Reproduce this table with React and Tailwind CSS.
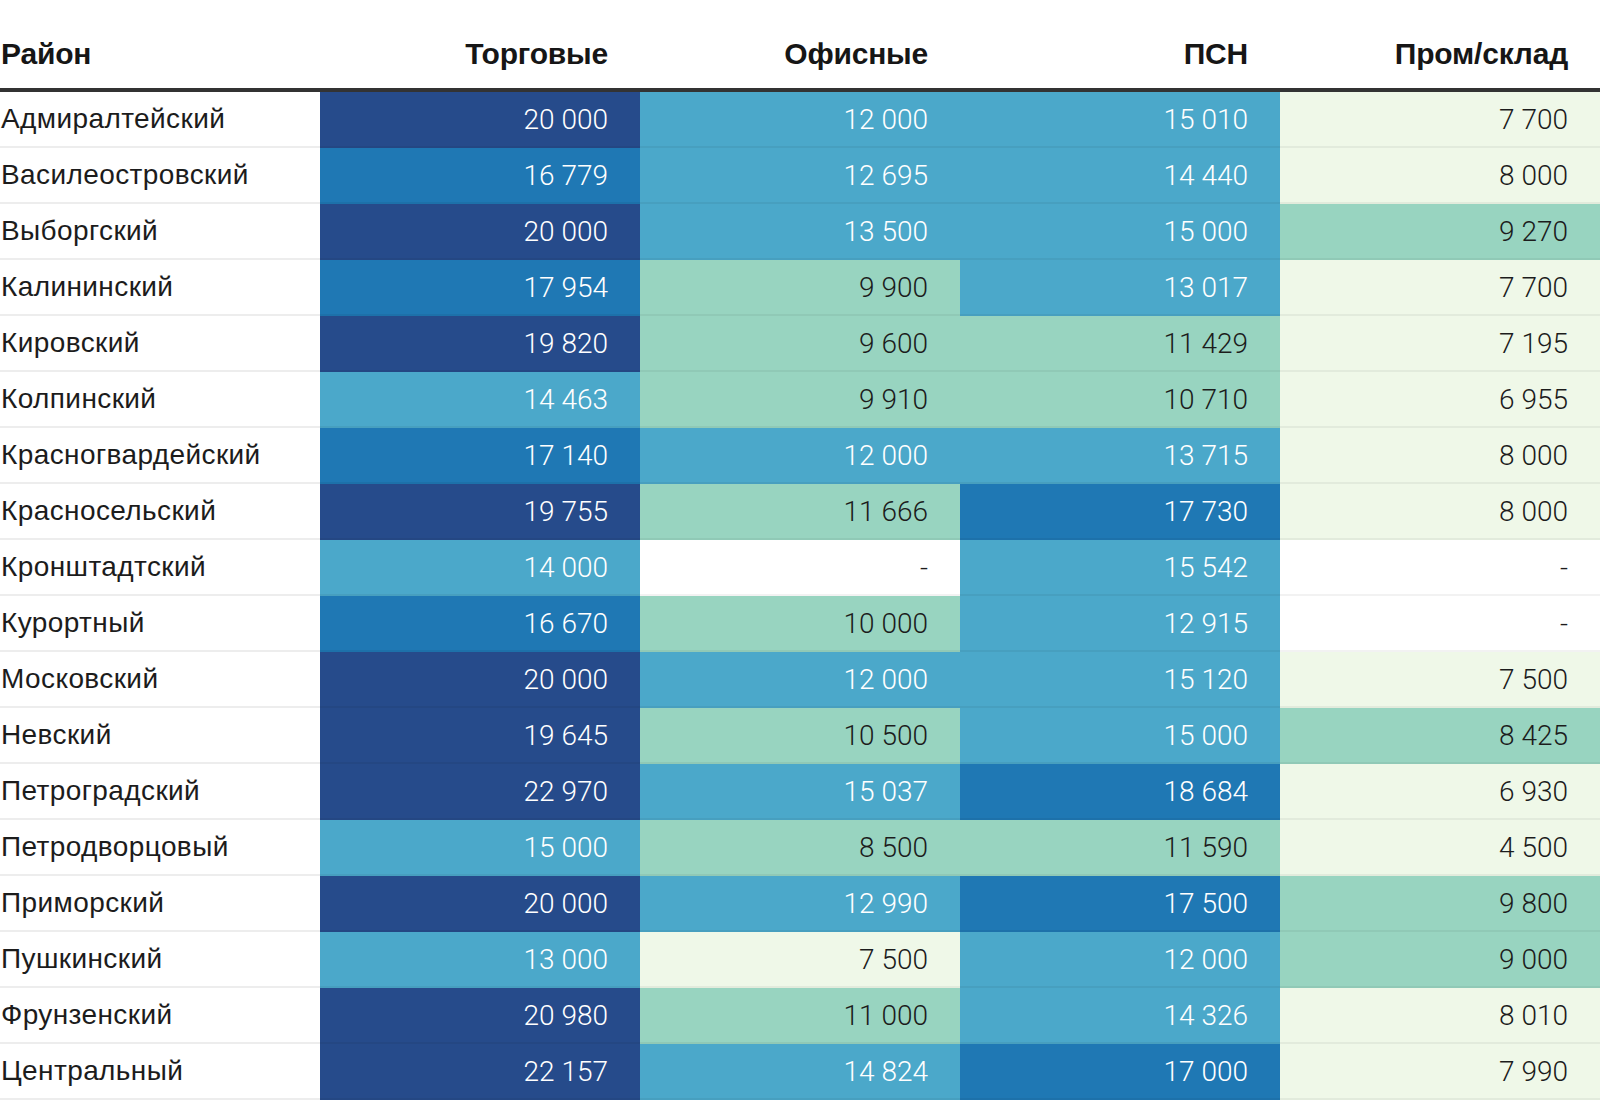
import React from "react";

// цвета шкалы
const C = {
  n: "bg-[#264b8b] text-white",
  b: "bg-[#1f78b4] text-white",
  l: "bg-[#4ba8ca] text-white",
  m: "bg-[#98d4c0] text-[#1c1c1c]",
  p: "bg-[#eff8e8] text-[#1c1c1c]",
  w: "bg-white text-[#1c1c1c]",
};

const rows = [
  ["Адмиралтейский", ["20 000", "n"], ["12 000", "l"], ["15 010", "l"], ["7 700", "p"]],
  ["Василеостровский", ["16 779", "b"], ["12 695", "l"], ["14 440", "l"], ["8 000", "p"]],
  ["Выборгский", ["20 000", "n"], ["13 500", "l"], ["15 000", "l"], ["9 270", "m"]],
  ["Калининский", ["17 954", "b"], ["9 900", "m"], ["13 017", "l"], ["7 700", "p"]],
  ["Кировский", ["19 820", "n"], ["9 600", "m"], ["11 429", "m"], ["7 195", "p"]],
  ["Колпинский", ["14 463", "l"], ["9 910", "m"], ["10 710", "m"], ["6 955", "p"]],
  ["Красногвардейский", ["17 140", "b"], ["12 000", "l"], ["13 715", "l"], ["8 000", "p"]],
  ["Красносельский", ["19 755", "n"], ["11 666", "m"], ["17 730", "b"], ["8 000", "p"]],
  ["Кронштадтский", ["14 000", "l"], ["-", "w"], ["15 542", "l"], ["-", "w"]],
  ["Курортный", ["16 670", "b"], ["10 000", "m"], ["12 915", "l"], ["-", "w"]],
  ["Московский", ["20 000", "n"], ["12 000", "l"], ["15 120", "l"], ["7 500", "p"]],
  ["Невский", ["19 645", "n"], ["10 500", "m"], ["15 000", "l"], ["8 425", "m"]],
  ["Петроградский", ["22 970", "n"], ["15 037", "l"], ["18 684", "b"], ["6 930", "p"]],
  ["Петродворцовый", ["15 000", "l"], ["8 500", "m"], ["11 590", "m"], ["4 500", "p"]],
  ["Приморский", ["20 000", "n"], ["12 990", "l"], ["17 500", "b"], ["9 800", "m"]],
  ["Пушкинский", ["13 000", "l"], ["7 500", "p"], ["12 000", "l"], ["9 000", "m"]],
  ["Фрунзенский", ["20 980", "n"], ["11 000", "m"], ["14 326", "l"], ["8 010", "p"]],
  ["Центральный", ["22 157", "n"], ["14 824", "l"], ["17 000", "b"], ["7 990", "p"]],
];

const headers = ["Торговые", "Офисные", "ПСН", "Пром/склад"];

export default function App() {
  return (
    <div className="w-[1600px] min-h-screen bg-white">
      {/* шапка */}
      <div className="grid grid-cols-5 h-[92px] border-b-4 border-[#333333] font-['Liberation_Sans',Arial,sans-serif] font-bold text-[30px] leading-[30px] tracking-[-0.2px] text-[#161616]">
        <div className="flex items-end pl-[1px] pb-[19px]">Район</div>
        {headers.map((h) => (
          <div key={h} className="flex items-end justify-end pr-8 pb-[19px]">
            {h}
          </div>
        ))}
      </div>

      {rows.map(([name, ...cells]) => (
        <div key={name} className="grid grid-cols-5">
          <div className="h-[56px] flex items-center pl-[1px] border-b-2 border-black/[0.07] font-['Liberation_Sans',Arial,sans-serif] text-[28px] tracking-[0.4px] text-[#1c1c1c]">
            {name}
          </div>
          {cells.map(([v, c], i) => (
            <div
              key={i}
              className={`h-[56px] flex items-center justify-end pr-8 pt-[2px] border-b-2 border-black/[0.05] font-['Roboto',sans-serif] font-light text-[28px] ${C[c]}`}
            >
              {v}
            </div>
          ))}
        </div>
      ))}
    </div>
  );
}
